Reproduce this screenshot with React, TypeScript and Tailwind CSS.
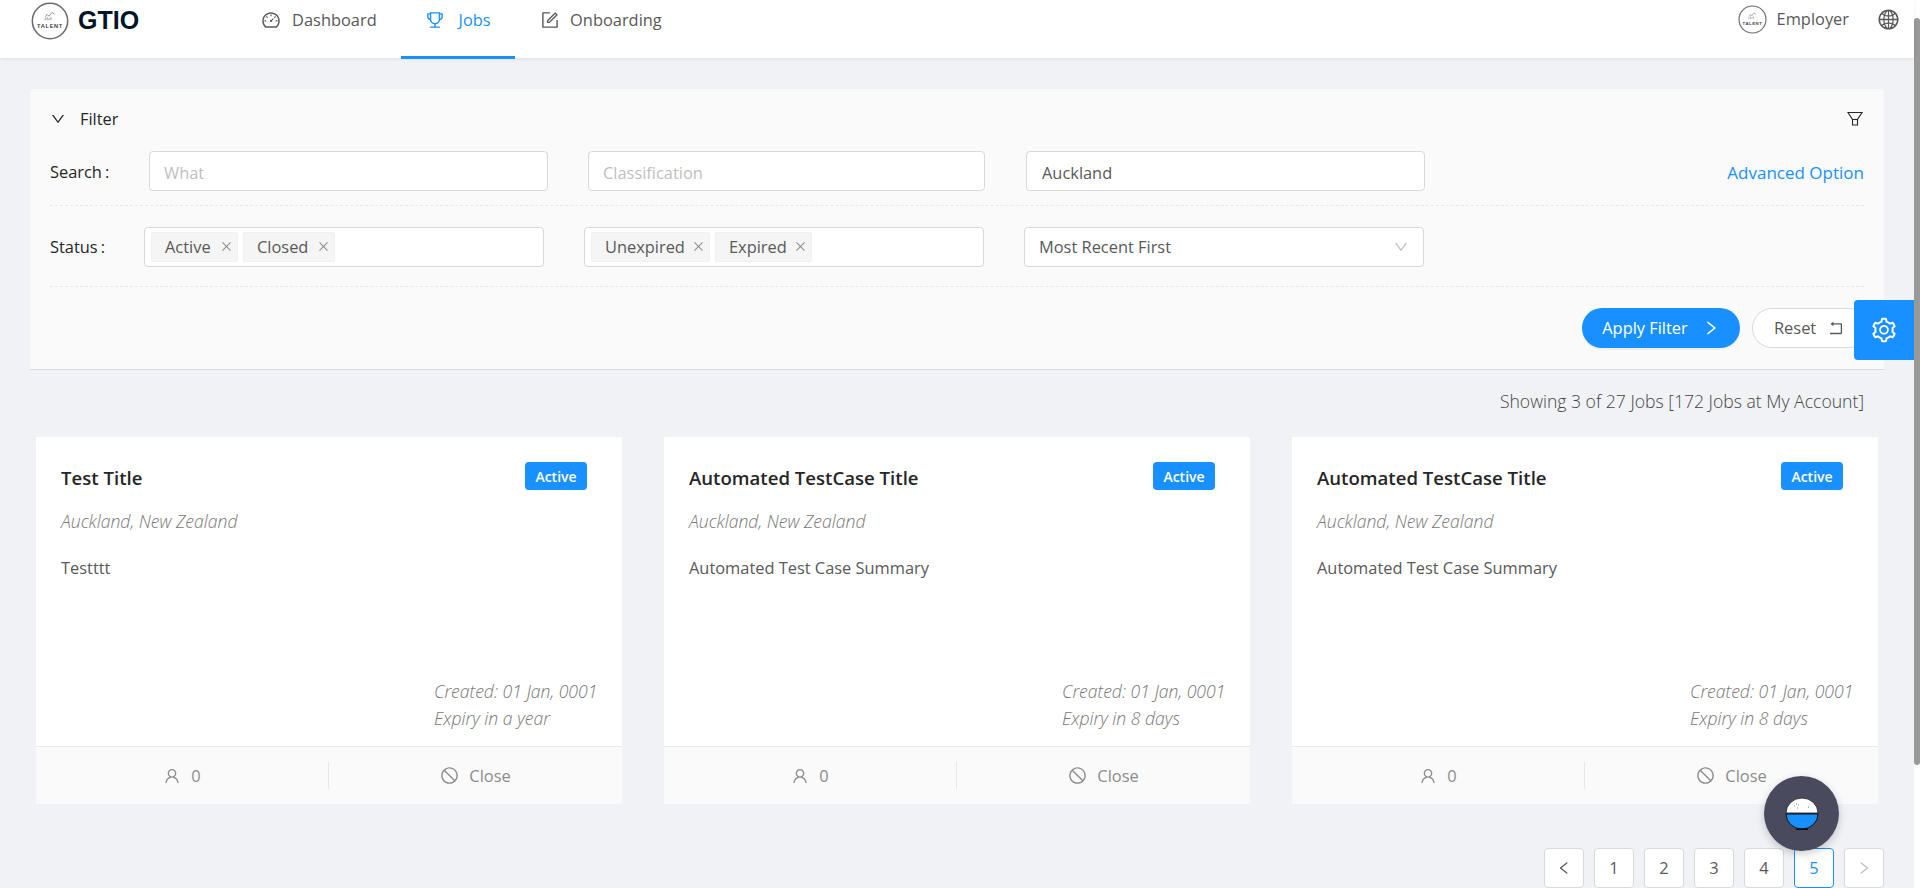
import { ReactNode } from 'react';
import {
  AiOutlineClose,
  AiOutlineDashboard,
  AiOutlineDown,
  AiOutlineForm,
  AiOutlineGlobal,
  AiOutlineLeft,
  AiOutlineRight,
  AiOutlineRollback,
  AiOutlineSetting,
  AiOutlineStop,
  AiOutlineTrophy,
  AiOutlineUser,
} from 'react-icons/ai';

const jobs = [
  { title: 'Test Title', summary: 'Testttt', expiry: 'Expiry in a year' },
  { title: 'Automated TestCase Title', summary: 'Automated Test Case Summary', expiry: 'Expiry in 8 days' },
  { title: 'Automated TestCase Title', summary: 'Automated Test Case Summary', expiry: 'Expiry in 8 days' },
];

function Logo({ size }: { size: number }) {
  return (
    <svg width={size} height={size} viewBox="0 0 40 40" className="shrink-0">
      <circle cx="20" cy="20" r="18.6" fill="#fff" stroke="#6b6b6b" strokeWidth="1.6" />
      <path d="M15 16l2-3 2 2 3-4 3 2" fill="none" stroke="#777" strokeWidth="0.8" />
      <path d="M15 19v-2M17 19v-3M19 19v-2M21 19v-3" stroke="#777" strokeWidth="0.8" />
      <text x="20" y="27" textAnchor="middle" fontSize="6" fontWeight="700" letterSpacing="0.7" fill="#444" fontFamily="Liberation Sans, sans-serif">
        TALENT
      </text>
    </svg>
  );
}

function Tag({ children, w }: { children: ReactNode; w: string }) {
  return (
    <span className={`flex h-[30px] items-center justify-between rounded-[2px] border border-[#f0f0f0] bg-[#f5f5f5] pl-[13px] pr-[4px] text-[#595959] ${w}`}>
      <span className="pt-[1px]">{children}</span>
      <AiOutlineClose className="size-[13px] text-[#8c8c8c]" />
    </span>
  );
}

function JobCard({ title, summary, expiry }: { title: string; summary: string; expiry: string }) {
  return (
    <div className="flex h-[367px] w-[586px] flex-col rounded-[2px] bg-white">
      <div className="flex flex-1 flex-col px-[26px] pt-[25px]">
        <div className="flex h-[28px] items-start justify-between pr-[9px]">
          <h3 className="-ml-[1px] pt-[1px] text-[18.6px] leading-[30px] font-semibold text-[#262626]">{title}</h3>
          <span className="flex h-[28px] w-[62px] items-center justify-center rounded-[4px] bg-[#1890ff] text-[14px] font-semibold text-white">
            Active
          </span>
        </div>
        <p className="-ml-[1px] mt-[17px] text-[17.6px] leading-[28px] font-light text-[#777777] italic">Auckland, New Zealand</p>
        <p className="-ml-[1px] mt-[19px] leading-[28px] text-[#595959]">{summary}</p>
        <div className="mt-auto mb-[14px] ml-auto w-[162px] text-[17.6px] leading-[27px] font-light text-[#777777] italic">
          <p className="whitespace-nowrap">Created: 01 Jan, 0001</p>
          <p>{expiry}</p>
        </div>
      </div>
      <div className="flex h-[58px] items-center border-t border-[#e8e8e8] bg-[#fafafa] text-[#8c8c8c]">
        <div className="flex h-[27px] w-[293px] items-center justify-center gap-[10px] border-r border-[#e8e8e8]">
          <AiOutlineUser className="size-[18px]" />
          <span className="pt-[1px]">0</span>
        </div>
        <div className="flex flex-1 items-center justify-center gap-[10px]">
          <AiOutlineStop className="size-[19px]" />
          <span className="pt-[1px]">Close</span>
        </div>
      </div>
    </div>
  );
}

function PageButton({ children, active, muted }: { children: ReactNode; active?: boolean; muted?: boolean }) {
  return (
    <span
      className={`flex size-[40px] items-center justify-center rounded-[4px] border bg-white ${
        active ? 'border-[#1890ff] text-[#1890ff]' : 'border-[#d9d9d9]'
      } ${muted ? 'text-[#bfbfbf]' : active ? '' : 'text-[#595959]'}`}
    >
      {children}
    </span>
  );
}

export default function App() {
  return (
    <div className="flex h-[888px] overflow-hidden bg-[#f0f2f5] text-[16.4px] font-['Open_Sans',sans-serif]">
      <div className="relative min-w-0 flex-1">
        <header className="flex h-[58px] items-start bg-white shadow-[0_1px_4px_rgba(0,21,41,0.08)]">
          <div className="flex h-[42px] items-center pl-[31px]">
            <Logo size={38} />
            <span className="ml-[9px] text-[25px] font-bold text-[#001529] font-['Liberation_Sans',sans-serif]">GTIO</span>
          </div>
          <nav className="ml-[122px] flex text-[#595959]">
            <a className="flex h-[40px] w-[140px] items-center gap-[11px]">
              <AiOutlineDashboard className="size-[20px]" />
              Dashboard
            </a>
            <a className="flex h-[59px] w-[114px] items-start justify-center border-b-[3px] border-[#1890ff] text-[#1890ff]">
              <span className="flex h-[40px] items-center gap-[14px] pr-[1px]">
                <AiOutlineTrophy className="size-[20px]" />
                Jobs
              </span>
            </a>
            <a className="ml-[25px] flex h-[40px] items-center gap-[10px]">
              <AiOutlineForm className="size-[20px]" />
              Onboarding
            </a>
          </nav>
          <div className="ml-auto flex h-[38px] items-center pr-[14px] text-[#595959]">
            <Logo size={29} />
            <span className="ml-[10px]">Employer</span>
            <AiOutlineGlobal className="ml-[28px] size-[23px]" />
          </div>
        </header>

        <main className="px-[30px] pt-[31px]">
          <section className="h-[281px] rounded-t-[4px] border-b border-[#d9d9d9] bg-[#fafafa] px-[20px]">
            <div className="flex h-[62px] items-center justify-between pb-[2px]">
              <div className="flex items-center gap-[14px] text-[#262626]">
                <AiOutlineDown className="size-[16px]" />
                Filter
              </div>
              <svg width="16" height="16" viewBox="0 0 16 16" fill="none" stroke="#262626" strokeWidth="1.1" className="mr-[1px]">
                <path d="M1 1.5h14l-4.5 7v5.5h-5v-5.5z" />
                <path d="M5.5 8.5h5" />
              </svg>
            </div>

            <div className="flex h-[55px] items-start border-b border-dashed border-[#e8e8e8]">
              <span className="w-[99px] pt-[9px] text-[#262626]">
                Search<span className="ml-[3px]">:</span>
              </span>
              <input placeholder="What" className="h-[40px] w-[399px] rounded-[4px] border border-[#d9d9d9] bg-white px-[14px] pt-[2px] placeholder:text-[#bfbfbf]" />
              <input placeholder="Classification" className="ml-[40px] h-[40px] w-[397px] rounded-[4px] border border-[#d9d9d9] bg-white px-[14px] pt-[2px] placeholder:text-[#bfbfbf]" />
              <input defaultValue="Auckland" className="ml-[41px] h-[40px] w-[399px] rounded-[4px] border border-[#d9d9d9] bg-white px-[15px] pt-[2px] text-[#595959]" />
              <a className="ml-auto pt-[9px] text-[17px] text-[#1890ff]">Advanced Option</a>
            </div>

            <div className="flex h-[81px] items-center border-b border-dashed border-[#e8e8e8] pt-[1px]">
              <span className="w-[94px] pt-[1px] text-[#262626]">
                Status<span className="ml-[3px]">:</span>
              </span>
              <div className="flex h-[40px] w-[400px] items-center gap-[5px] rounded-[4px] border border-[#d9d9d9] bg-white px-[6px]">
                <Tag w="w-[87px]">Active</Tag>
                <Tag w="w-[92px]">Closed</Tag>
              </div>
              <div className="ml-[40px] flex h-[40px] w-[400px] items-center gap-[5px] rounded-[4px] border border-[#d9d9d9] bg-white px-[6px]">
                <Tag w="w-[119px]">Unexpired</Tag>
                <Tag w="w-[97px]">Expired</Tag>
              </div>
              <div className="ml-[40px] flex h-[40px] w-[400px] items-center justify-between rounded-[4px] border border-[#d9d9d9] bg-white px-[14px] text-[#595959]">
                <span className="pt-[1px]">Most Recent First</span>
                <AiOutlineDown className="size-[16px] text-[#bfbfbf]" />
              </div>
            </div>

            <div className="flex h-[81px] items-center justify-end gap-[12px]">
              <button className="flex h-[40px] w-[158px] items-center justify-center gap-[14px] rounded-full bg-[#1890ff] text-white shadow-[0_2px_0_rgba(0,0,0,0.04)]">
                <span className="pt-[1px]">Apply Filter</span>
                <AiOutlineRight className="size-[18px]" />
              </button>
              <button className="-mr-[6px] flex h-[40px] w-[118px] items-center gap-[11px] rounded-full border border-[#d9d9d9] bg-white pl-[21px] text-[#595959]">
                <span className="pt-[1px]">Reset</span>
                <AiOutlineRollback className="size-[18px]" />
              </button>
            </div>
          </section>

          <p className="mt-[17px] pr-[20px] text-right text-[17.6px] leading-[28px] font-light text-[#444444]">Showing 3 of 27 Jobs [172 Jobs at My Account]</p>

          <div className="mt-[22px] flex justify-between px-[6px]">
            {jobs.map((job, i) => (
              <JobCard key={i} {...job} />
            ))}
          </div>

          <div className="mt-[44px] flex justify-end gap-[10px]">
            <PageButton>
              <AiOutlineLeft className="size-[16px]" />
            </PageButton>
            <PageButton>1</PageButton>
            <PageButton>2</PageButton>
            <PageButton>3</PageButton>
            <PageButton>4</PageButton>
            <PageButton active>5</PageButton>
            <PageButton muted>
              <AiOutlineRight className="size-[16px]" />
            </PageButton>
          </div>
        </main>

        <div className="absolute top-[300px] right-0 flex size-[60px] items-center justify-center rounded-l-[4px] bg-[#1890ff] text-white">
          <AiOutlineSetting className="size-[28px]" />
        </div>

        <div className="absolute top-[776px] left-[1764px] flex size-[75px] items-center justify-center rounded-full bg-[#4a4a5e] shadow-[0_3px_8px_rgba(0,0,0,0.2)]">
          <svg width="34" height="34" viewBox="0 0 34 34">
            <path d="M1 16a16 15 0 0 1 32 0z" fill="#fff" stroke="#111" strokeWidth="0.8" />
            <path d="M1 17h32a16 15 0 0 1-32 0z" fill="#1890ff" stroke="#111" strokeWidth="1" />
            <path d="M11 31.5h12v1.5h-12z" fill="#111" />
            <path d="M9 9h1M12 11h1M11 7h1M13 8h.8M23 10h1" stroke="#555" strokeWidth="0.8" />
          </svg>
        </div>
      </div>

      <div className="h-full w-[6px] bg-white pt-[18px]">
        <div className="h-[747px] rounded-full bg-[#999999]" />
      </div>
    </div>
  );
}
